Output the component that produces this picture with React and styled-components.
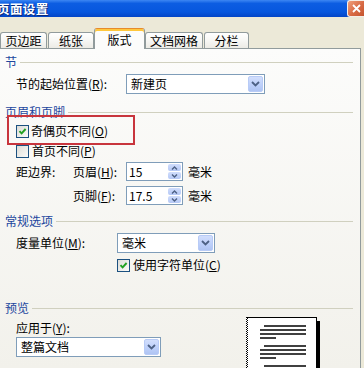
import React from 'react';
import styled, { createGlobalStyle } from 'styled-components';

const Global = createGlobalStyle`
  html, body { margin: 0; padding: 0; background: #ece9d8; }
  body {
    font-family: "Noto Sans CJK SC", "Noto Sans", sans-serif;
    font-size: 12px;
    color: #000;
    overflow: hidden;
  }
`;

const Window = styled.div`
  width: 364px;
  height: 368px;
  overflow: hidden;
  background: #ece9d8;
  display: flex;
  flex-direction: column;
`;

const TitleBar = styled.div`
  height: 17px;
  flex: none;
  display: flex;
  align-items: center;
  justify-content: space-between;
  overflow: hidden;
  background: linear-gradient(#3d87f3 0%, #0c5de2 20%, #0757de 70%, #0345c6 100%);
`;

const Title = styled.span`
  margin-left: -3px;
  color: #fff;
  font-weight: bold;
  font-size: 12.5px;
  line-height: 17px;
  letter-spacing: 0.4px;
  text-shadow: 1px 1px 0 #0a2a7a;
`;

const CloseButton = styled.div`
  width: 17px;
  height: 17px;
  box-sizing: border-box;
  border: 1px solid #f4eee8;
  border-right: none;
  border-radius: 3px 0 0 3px;
  background: linear-gradient(135deg, #f0a07c 0%, #d86a44 55%, #c4542e 100%);
  display: flex;
  align-items: center;
  justify-content: center;
`;

const TabStrip = styled.div`
  height: 31px;
  flex: none;
  display: flex;
  align-items: flex-end;
  position: relative;
  z-index: 2;
`;

const Tab = styled.div`
  box-sizing: border-box;
  width: ${p => p.$w}px;
  margin-left: ${p => p.$ml || 0}px;
  height: ${p => (p.$active ? 21 : 16)}px;
  margin-bottom: ${p => (p.$active ? -1 : 0)}px;
  padding-top: ${p => (p.$active ? 2 : 0)}px;
  border: 1px solid #919b9c;
  border-bottom: none;
  border-top: 1px solid ${p => (p.$active ? '#e68b2c' : '#919b9c')};
  border-radius: 3px 3px 0 0;
  background: ${p =>
    p.$active
      ? '#fcfcfb'
      : 'linear-gradient(#ffffff 0%, #f7f7f4 50%, #ecebe5 100%)'};
  box-shadow: ${p => (p.$active ? 'inset 0 2px 0 #ffc73c' : 'none')};
  display: flex;
  align-items: center;
  justify-content: center;
  line-height: 14px;
  white-space: nowrap;
`;

const Panel = styled.div`
  flex: 1;
  margin-left: -1px;
  width: 362px;
  box-sizing: border-box;
  border: 1px solid #919b9c;
  border-bottom: none;
  background: linear-gradient(#fcfcfb, #f2f1eb);
  display: flex;
  flex-direction: column;
  padding-top: 6px;
  position: relative;
  z-index: 1;
`;

const GroupHeader = styled.div`
  display: flex;
  align-items: center;
  height: 14px;
  line-height: 14px;
  margin-top: ${p => p.$mt || 0}px;
  padding-left: 5px;
  margin-right: 7px;
  color: #1d479e;
  white-space: nowrap;
  &::after {
    content: '';
    flex: 1;
    height: 1px;
    background: #d0d0bf;
    margin-left: 3px;
  }
`;

const Row = styled.div`
  display: flex;
  align-items: center;
  height: ${p => p.$h || 20}px;
  margin-top: ${p => p.$mt || 0}px;
  padding-left: ${p => (p.$pl == null ? 16 : p.$pl)}px;
  position: relative;
`;

const Label = styled.span`
  width: ${p => (p.$w ? `${p.$w}px` : 'auto')};
  flex: none;
  white-space: nowrap;
  line-height: 14px;
`;

const SelectBox = styled.div`
  box-sizing: border-box;
  width: ${p => p.$w}px;
  height: 20px;
  border: 1px solid #7f9db9;
  background: #fff;
  display: flex;
  align-items: stretch;
  padding: 1px;
  flex: none;
`;

const SelectText = styled.span`
  flex: 1;
  padding-left: 3px;
  line-height: 16px;
  white-space: nowrap;
`;

const DropButton = styled.div`
  width: 15px;
  box-sizing: border-box;
  border: 1px solid #b8cbf6;
  border-radius: 2px;
  background: linear-gradient(#d2defc 0%, #bccffa 60%, #afc4f3 100%);
  display: flex;
  align-items: center;
  justify-content: center;
`;

const SpinBox = styled.div`
  box-sizing: border-box;
  width: 57px;
  height: 19px;
  border: 1px solid #7f9db9;
  background: #fff;
  display: flex;
  padding: 1px;
  flex: none;
`;

const SpinText = styled.span`
  flex: 1;
  padding-left: 1px;
  line-height: 15px;
`;

const SpinButtons = styled.div`
  width: 13px;
  display: flex;
  flex-direction: column;
  gap: 1px;
`;

const SpinHalf = styled.div`
  flex: 1;
  border-radius: 2px;
  background: linear-gradient(#d0ddfc, #b5c8f5);
  display: flex;
  align-items: center;
  justify-content: center;
`;

const Unit = styled.span`
  margin-left: 5px;
  line-height: 14px;
`;

const CheckBox = styled.span`
  box-sizing: border-box;
  width: 13px;
  height: 13px;
  flex: none;
  border: 1px solid #1c5180;
  background: linear-gradient(135deg, #dcdcd7, #fbfbf9);
  display: flex;
  align-items: center;
  justify-content: center;
`;

const CheckLabel = styled.span`
  margin-left: ${p => p.$gap || 2}px;
  line-height: 14px;
  white-space: nowrap;
`;

const Highlight = styled.div`
  position: absolute;
  left: 7px;
  top: -6px;
  width: 128px;
  height: 30px;
  box-sizing: border-box;
  border: 2px solid #c8353d;
  pointer-events: none;
`;

const PreviewRow = styled.div`
  display: flex;
  align-items: flex-start;
  margin-top: 1px;
  padding-left: 16px;
`;

const ApplyColumn = styled.div`
  width: 145px;
  flex: none;
  display: flex;
  flex-direction: column;
  gap: 2px;
  padding-top: 5px;
`;

const PreviewPage = styled.svg`
  margin-left: 85px;
  flex: none;
  display: block;
`;

const Chevron = () => (
  <svg width="9" height="6" viewBox="0 0 9 6">
    <path d="M1 1 L4.5 4.5 L8 1" fill="none" stroke="#4d6185" strokeWidth="1.8" />
  </svg>
);

const SmallUp = () => (
  <svg width="7" height="4" viewBox="0 0 7 4">
    <path d="M1 3.5 L3.5 1 L6 3.5" fill="none" stroke="#4d6185" strokeWidth="1.4" />
  </svg>
);

const SmallDown = () => (
  <svg width="7" height="4" viewBox="0 0 7 4">
    <path d="M1 0.5 L3.5 3 L6 0.5" fill="none" stroke="#4d6185" strokeWidth="1.4" />
  </svg>
);

const Tick = () => (
  <svg width="9" height="9" viewBox="0 0 9 9">
    <path d="M1.5 4.2 L3.6 6.4 L7.6 2" fill="none" stroke="#21a121" strokeWidth="1.9" />
  </svg>
);

const Select = ({ w, children }) => (
  <SelectBox $w={w}>
    <SelectText>{children}</SelectText>
    <DropButton><Chevron /></DropButton>
  </SelectBox>
);

const Spin = ({ value }) => (
  <SpinBox>
    <SpinText>{value}</SpinText>
    <SpinButtons>
      <SpinHalf><SmallUp /></SpinHalf>
      <SpinHalf><SmallDown /></SpinHalf>
    </SpinButtons>
  </SpinBox>
);

const Check = ({ checked }) => <CheckBox>{checked && <Tick />}</CheckBox>;

const tabs = [
  { label: '页边距', w: 47, ml: 0 },
  { label: '纸张', w: 46, ml: 1 },
  { label: '版式', w: 51, ml: 0, active: true },
  { label: '文档网格', w: 58, ml: 0 },
  { label: '分栏', w: 45, ml: 1 },
];

export default function App() {
  const lineYs = [10, 14, 18];
  return (
    <>
      <Global />
      <Window>
        <TitleBar>
          <Title>页面设置</Title>
          <CloseButton>
            <svg width="9" height="9" viewBox="0 0 9 9">
              <path d="M1 1 L8 8 M8 1 L1 8" stroke="#fff" strokeWidth="1.8" />
            </svg>
          </CloseButton>
        </TitleBar>
        <TabStrip>
          {tabs.map(t => (
            <Tab key={t.label} $w={t.w} $ml={t.ml} $active={t.active}>
              {t.label}
            </Tab>
          ))}
        </TabStrip>
        <Panel>
          <GroupHeader>节</GroupHeader>
          <Row $mt={5}>
            <Label $w={110}>节的起始位置(<u>R</u>):</Label>
            <Select w={139}>新建页</Select>
          </Row>

          <GroupHeader $mt={11}>页眉和页脚</GroupHeader>
          <Row $mt={2}>
            <Check checked />
            <CheckLabel>奇偶页不同(<u>O</u>)</CheckLabel>
            <Highlight />
          </Row>
          <Row>
            <Check />
            <CheckLabel $gap={3}>首页不同(<u>P</u>)</CheckLabel>
          </Row>
          <Row $h={19} $mt={1}>
            <Label $w={57}>距边界:</Label>
            <Label $w={53}>页眉(<u>H</u>):</Label>
            <Spin value="15" />
            <Unit>毫米</Unit>
          </Row>
          <Row $h={19} $mt={5} $pl={73}>
            <Label $w={53}>页脚(<u>F</u>):</Label>
            <Spin value="17.5" />
            <Unit>毫米</Unit>
          </Row>

          <GroupHeader $mt={9}>常规选项</GroupHeader>
          <Row $mt={5}>
            <Label $w={101}>度量单位(<u>M</u>):</Label>
            <Select w={98}>毫米</Select>
          </Row>
          <Row $mt={2} $pl={117}>
            <Check checked />
            <CheckLabel $gap={3}>使用字符单位(<u>C</u>)</CheckLabel>
          </Row>

          <GroupHeader $mt={26}>预览</GroupHeader>
          <PreviewRow>
            <ApplyColumn>
              <Label>应用于(<u>Y</u>):</Label>
              <Select w={145}>整篇文档</Select>
            </ApplyColumn>
            <PreviewPage width="74" height="52" viewBox="0 0 74 52">
              <rect x="0" y="1" width="71" height="60" fill="#fff" />
              <rect x="71" y="5" width="3" height="60" fill="#000" />
              <line x1="0" y1="1.5" x2="71" y2="1.5" stroke="#000" strokeWidth="1" />
              <line x1="70.5" y1="1" x2="70.5" y2="60" stroke="#000" strokeWidth="1" />
              <line x1="0.5" y1="1" x2="0.5" y2="60" stroke="#000" strokeWidth="1" strokeDasharray="1 1" />
              <line x1="1.5" y1="2" x2="1.5" y2="60" stroke="#000" strokeWidth="1" strokeDasharray="1 1" />
              {[0, 20].map(off => (
                <g key={off}>
                  {lineYs.map((y, i) => (
                    <line
                      key={y}
                      x1={i === 0 ? 18 : 14}
                      y1={y + off}
                      x2="60"
                      y2={y + off}
                      stroke="#000"
                      strokeWidth="1.5"
                    />
                  ))}
                  <line x1="14" y1={22 + off} x2="30" y2={22 + off} stroke="#000" strokeWidth="1.5" />
                </g>
              ))}
              <line x1="18" y1="50" x2="60" y2="50" stroke="#000" strokeWidth="1.5" />
            </PreviewPage>
          </PreviewRow>
        </Panel>
      </Window>
    </>
  );
}
